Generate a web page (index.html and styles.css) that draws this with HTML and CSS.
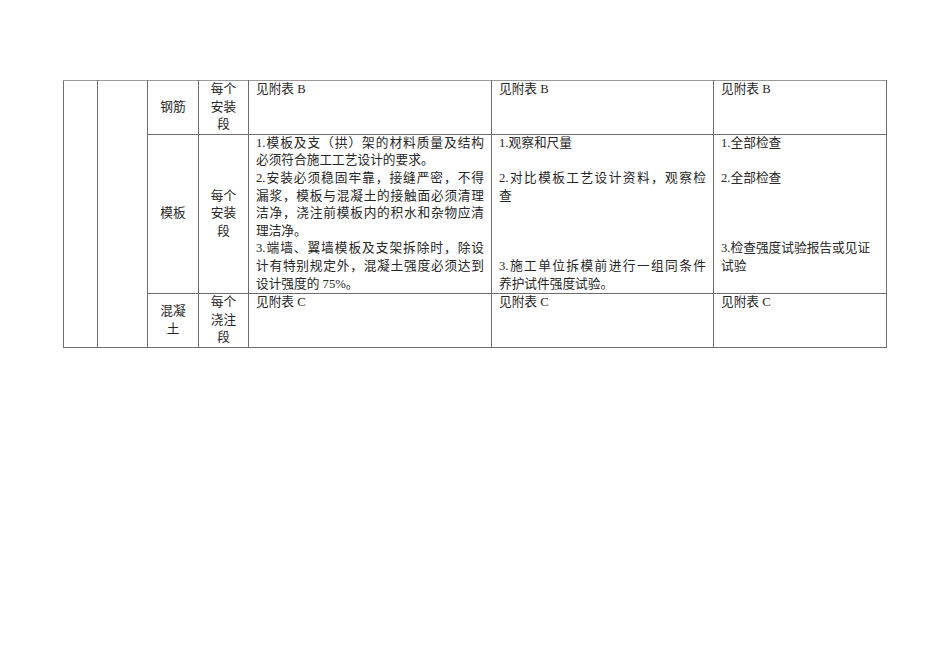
FILE: index.html
```html
<!DOCTYPE html>
<html lang="zh-CN">
<head>
<meta charset="utf-8">
<title>模板检验表</title>
<link rel="stylesheet" href="styles.css">
</head>
<body>
<table class="sheet">
  <colgroup>
    <col class="c1"><col class="c2"><col class="c3"><col class="c4"><col class="c5"><col class="c6"><col class="c7">
  </colgroup>
  <tr class="r1">
    <td rowspan="3"></td>
    <td rowspan="3"></td>
    <td class="mid">钢筋</td>
    <td class="mid">每个安装段</td>
    <td class="txt"><div class="ln">见附表 B</div></td>
    <td class="txt"><div class="ln">见附表 B</div></td>
    <td class="txt"><div class="ln">见附表 B</div></td>
  </tr>
  <tr class="r2">
    <td class="mid">模板</td>
    <td class="mid">每个安装段</td>
    <td class="txt">
      <div class="ln full">1.模板及支（拱）架的材料质量及结构</div>
      <div class="ln">必须符合施工工艺设计的要求。</div>
      <div class="ln full">2.安装必须稳固牢靠，接缝严密，不得</div>
      <div class="ln full">漏浆，模板与混凝土的接触面必须清理</div>
      <div class="ln full">洁净，浇注前模板内的积水和杂物应清</div>
      <div class="ln">理洁净。</div>
      <div class="ln full">3.端墙、翼墙模板及支架拆除时，除设</div>
      <div class="ln full">计有特别规定外，混凝土强度必须达到</div>
      <div class="ln">设计强度的 75%。</div>
    </td>
    <td class="txt">
      <div class="ln">1.观察和尺量</div>
      <div class="ln">&nbsp;</div>
      <div class="ln full">2.对比模板工艺设计资料，观察检</div>
      <div class="ln">查</div>
      <div class="ln">&nbsp;</div>
      <div class="ln">&nbsp;</div>
      <div class="ln">&nbsp;</div>
      <div class="ln full">3.施工单位拆模前进行一组同条件</div>
      <div class="ln">养护试件强度试验。</div>
    </td>
    <td class="txt">
      <div class="ln">1.全部检查</div>
      <div class="ln">&nbsp;</div>
      <div class="ln">2.全部检查</div>
      <div class="ln">&nbsp;</div>
      <div class="ln">&nbsp;</div>
      <div class="ln">&nbsp;</div>
      <div class="ln">3.检查强度试验报告或见证</div>
      <div class="ln">试验</div>
      <div class="ln">&nbsp;</div>
    </td>
  </tr>
  <tr class="r3">
    <td class="mid">混凝土</td>
    <td class="mid">每个浇注段</td>
    <td class="txt"><div class="ln">见附表 C</div></td>
    <td class="txt"><div class="ln">见附表 C</div></td>
    <td class="txt"><div class="ln">见附表 C</div></td>
  </tr>
</table>
</body>
</html>
```
FILE: styles.css
```css
html, body {
  margin: 0;
  padding: 0;
  background: #ffffff;
}

body {
  font-family: "Liberation Serif", "Noto Sans CJK SC", serif;
  font-size: 12.7px;
  line-height: 17.6px;
  color: #262626;
}

.sheet {
  margin: 80px 0 0 63px;
  width: 823px;
  table-layout: fixed;
  border-collapse: collapse;
}

.c1 { width: 34px; }
.c2 { width: 50px; }
.c3 { width: 51px; }
.c4 { width: 50px; }
.c5 { width: 243px; }
.c6 { width: 222px; }
.c7 { width: 173px; }

.sheet td {
  border: 1px solid #6e6e6e;
  padding: 0 7px 0 7px;
  vertical-align: top;
}

.sheet tr.r1 td {
  border-top-color: #9a9a9a;
}

.sheet td.mid {
  text-align: center;
  vertical-align: middle;
  padding: 0 6px;
}

.ln {
  height: 17.6px;
  white-space: nowrap;
}

.ln.full {
  text-align: justify;
  text-align-last: justify;
}

.r1 td.txt {
  height: 52.8px;
}
```
